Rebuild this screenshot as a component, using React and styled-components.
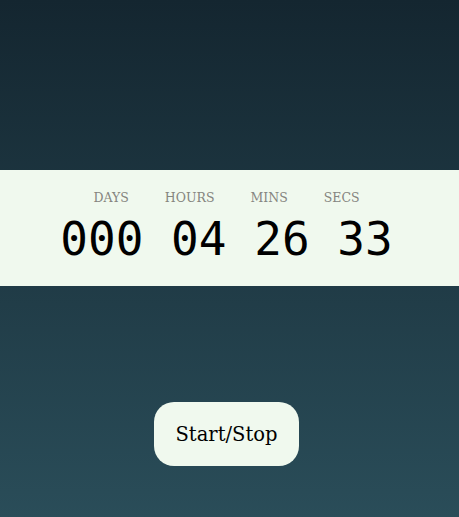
import React, { useEffect, useState } from 'react'
import styled, { createGlobalStyle } from 'styled-components'

const GlobalStyle = createGlobalStyle`
  html, body {
    margin: 0;
    padding: 0;
    height: 100%;
  }
  body {
    background: linear-gradient(180deg, #142630 0%, #2a4d59 100%);
    min-height: 517px;
  }
`

const Page = styled.div`
  height: 517px;
  display: flex;
  flex-direction: column;
  align-items: center;
  padding-top: 170px;
  box-sizing: border-box;
`

const Band = styled.div`
  align-self: stretch;
  height: 116px;
  background: #f0f9ee;
  display: flex;
  flex-direction: column;
  align-items: center;
  padding: 20px 6px 0 0;
  box-sizing: border-box;
`

const Labels = styled.div`
  display: flex;
  gap: 36px;
`

const Label = styled.span`
  font-family: "DejaVu Serif", "Liberation Serif", serif;
  font-size: 12.5px;
  color: #85857f;
  line-height: 16px;
`

const Digits = styled.div`
  margin-top: 6px;
  font-family: "DejaVu Sans Mono", "Liberation Mono", monospace;
  font-size: 46px;
  line-height: 54px;
  color: #000;
  white-space: pre;
`

const Button = styled.button`
  margin-top: 116px;
  margin-right: 6px;
  width: 145px;
  height: 64px;
  border: none;
  border-radius: 20px;
  background: #f0f9ee;
  color: #000;
  font-family: "DejaVu Serif", "Liberation Serif", serif;
  font-size: 19.5px;
  cursor: pointer;
`

const pad = (n, w) => String(n).padStart(w, '0')

export default function App() {
	const [secs, setSecs] = useState(4 * 3600 + 26 * 60 + 33)
	const [running, setRunning] = useState(false)

	useEffect(() => {
		if (!running) return
		const t = setInterval(() => setSecs((s) => s + 1), 1000)
		return () => clearInterval(t)
	}, [running])

	const days = Math.floor(secs / 86400)
	const hours = Math.floor((secs % 86400) / 3600)
	const mins = Math.floor((secs % 3600) / 60)
	const s = secs % 60

	return (
		<>
			<GlobalStyle />
			<Page>
				<Band>
					<Labels>
						<Label>DAYS</Label>
						<Label>HOURS</Label>
						<Label>MINS</Label>
						<Label>SECS</Label>
					</Labels>
					<Digits>{`${pad(days, 3)} ${pad(hours, 2)} ${pad(mins, 2)} ${pad(s, 2)}`}</Digits>
				</Band>
				<Button onClick={() => setRunning((r) => !r)}>Start/Stop</Button>
			</Page>
		</>
	)
}
